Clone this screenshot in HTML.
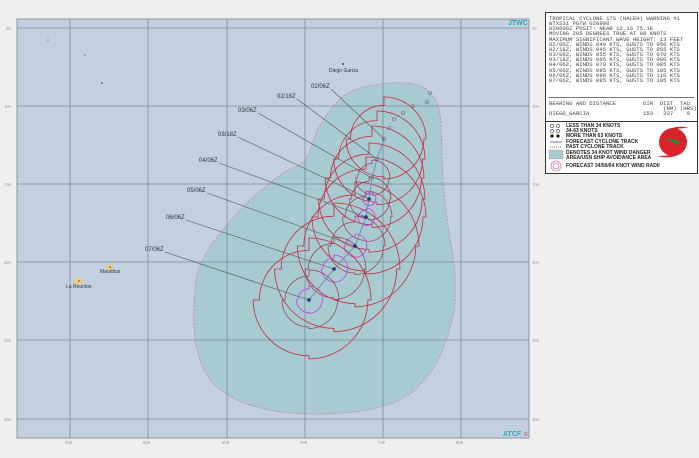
<!DOCTYPE html>
<html><head><meta charset="utf-8"><style>
html,body{margin:0;padding:0;background:#efefef;width:699px;height:458px;overflow:hidden;font-family:"Liberation Sans",sans-serif}
#m{position:absolute;left:0;top:0}
.box{position:absolute;left:545px;width:151px;border:1px solid #333;background:#fff}
.t{font-family:"Liberation Mono",monospace;font-size:5.6px;line-height:5.15px;color:#444;white-space:pre;position:absolute}
.lg{position:absolute;left:20px;font-size:5px;font-weight:bold;color:#222;white-space:nowrap}
</style></head><body>
<svg id="m" width="699" height="458" xmlns="http://www.w3.org/2000/svg">
<rect x="17" y="19" width="512" height="419" fill="#c3d0e0" stroke="#8a96a6" stroke-width="1"/>
<path id="da" d="" fill="#a7cbd0" stroke="#d8808f" stroke-width="0.8" stroke-dasharray="2,1.5"/>
<g stroke="#7f8a98" stroke-width="0.8">
<line x1="70" y1="19" x2="70" y2="438"/><line x1="148" y1="19" x2="148" y2="438"/><line x1="227" y1="19" x2="227" y2="438"/><line x1="305" y1="19" x2="305" y2="438"/><line x1="383" y1="19" x2="383" y2="438"/><line x1="461" y1="19" x2="461" y2="438"/>
<line x1="17" y1="28" x2="529" y2="28"/><line x1="17" y1="106" x2="529" y2="106"/><line x1="17" y1="184" x2="529" y2="184"/><line x1="17" y1="262" x2="529" y2="262"/><line x1="17" y1="340" x2="529" y2="340"/><line x1="17" y1="419" x2="529" y2="419"/>
</g>
<g font-size="4.5" fill="#888" font-family="Liberation Serif,serif">
<text x="6" y="30">5S</text><text x="4" y="108">10S</text><text x="4" y="186">15S</text><text x="4" y="264">20S</text><text x="4" y="342">25S</text><text x="4" y="421">30S</text>
<text x="532" y="30">5S</text><text x="532" y="108">10S</text><text x="532" y="186">15S</text><text x="532" y="264">20S</text><text x="532" y="342">25S</text><text x="532" y="421">30S</text>
<text x="65" y="444">55E</text><text x="143" y="444">60E</text><text x="222" y="444">65E</text><text x="300" y="444">70E</text><text x="378" y="444">75E</text><text x="456" y="444">80E</text>
</g>
<text x="508" y="25" font-size="7" font-weight="bold" fill="#2aa7b0">JTWC</text>
<text x="503" y="436" font-size="7" font-weight="bold" fill="#2aa7b0">ATCF</text><text x="524" y="436" font-size="5" fill="#c33">©</text>
<circle cx="48" cy="40" r="0.8" fill="#777"/><circle cx="85" cy="55" r="0.8" fill="#777"/><circle cx="102" cy="83" r="1" fill="#777"/>
<circle cx="343" cy="64" r="1" fill="#444"/><text x="329" y="72" font-size="5" fill="#333">Diego Garcia</text>
<ellipse cx="110" cy="267" rx="3" ry="2.5" fill="#f0d060"/><circle cx="110" cy="267" r="0.7" fill="#333"/><text x="100" y="273" font-size="5" fill="#333">Mauritius</text>
<ellipse cx="78" cy="281" rx="4" ry="3" fill="#f0d060"/><circle cx="79" cy="281" r="0.7" fill="#333"/><text x="66" y="288" font-size="5" fill="#333">La Reunion</text>
<g id="radii" fill="none"></g>
<g stroke="#555" stroke-width="0.6" id="ll"></g>
<g font-size="6" fill="#333" id="lt"></g>
<polyline points="430,93 427,102 413,106 403,113 394,119 389,128 384,139" fill="none" stroke="#8aa" stroke-width="0.6" stroke-dasharray="1,1"/>
<polyline points="384,139 377,159 372,178 369,199 366,217 355,246 334,269 309,300" fill="none" stroke="#6a7fb0" stroke-width="0.8"/>
<g fill="none" stroke="#667" stroke-width="0.6"><circle cx="430" cy="93" r="1.5"/><circle cx="427" cy="102" r="1.5"/><circle cx="413" cy="106" r="1.5"/><circle cx="403" cy="113" r="1.5"/><circle cx="394" cy="119" r="1.5"/><circle cx="389" cy="128" r="1.5"/><circle cx="384" cy="139" r="1.8"/><circle cx="377" cy="159" r="1.5"/><circle cx="372" cy="178" r="1.5"/></g>
<g fill="#223388"><circle cx="369" cy="199" r="1.8"/><circle cx="366" cy="217" r="1.8"/><circle cx="355" cy="246" r="1.8"/><circle cx="334" cy="269" r="1.8"/><circle cx="309" cy="300" r="1.8"/></g>
</svg>
<div class="box" style="top:12px;height:110px">
<div class="t" style="left:3px;top:3px">TROPICAL CYCLONE 17S (HALEH) WARNING #1
WTXS31 PGTW 020900
020600Z POSIT: NEAR 12.1S 75.1E
MOVING 205 DEGREES TRUE AT 08 KNOTS
MAXIMUM SIGNIFICANT WAVE HEIGHT: 13 FEET
02/06Z, WINDS 040 KTS, GUSTS TO 050 KTS
02/18Z, WINDS 045 KTS, GUSTS TO 055 KTS
03/06Z, WINDS 055 KTS, GUSTS TO 070 KTS
03/18Z, WINDS 065 KTS, GUSTS TO 080 KTS
04/06Z, WINDS 070 KTS, GUSTS TO 085 KTS
05/06Z, WINDS 085 KTS, GUSTS TO 105 KTS
06/06Z, WINDS 090 KTS, GUSTS TO 110 KTS
07/06Z, WINDS 085 KTS, GUSTS TO 105 KTS</div>
<div style="position:absolute;left:3px;right:3px;top:84px;border-top:1px solid #777"></div>
<div class="t" style="left:3px;top:88px">BEARING AND DISTANCE        DIR  DIST  TAU
                                  (NM) (HRS)
DIEGO_GARCIA                153   337    0</div>
</div>
<div class="box" style="top:121px;height:51px">
<svg width="151" height="51" style="position:absolute;left:0;top:0">
<g fill="none" stroke="#333" stroke-width="0.6"><circle cx="6" cy="4" r="1.6"/><circle cx="12" cy="4" r="1.6"/><circle cx="6" cy="9" r="1.6"/><circle cx="12" cy="9" r="1.6"/></g>
<g fill="#111"><circle cx="6" cy="14" r="1.6"/><circle cx="12" cy="14" r="1.6"/></g>
<line x1="4" y1="20" x2="16" y2="20" stroke="#6a7fb0" stroke-width="1"/>
<line x1="4" y1="25" x2="16" y2="25" stroke="#555" stroke-width="0.8" stroke-dasharray="1,1"/>
<rect x="3" y="28" width="14" height="9" fill="#a7cbd0" stroke="#d8808f" stroke-width="0.6" stroke-dasharray="1.5,1"/>
<circle cx="10" cy="44" r="5" fill="#fff" stroke="#e08090" stroke-width="0.8"/><circle cx="10" cy="44" r="3" fill="none" stroke="#c050c0" stroke-width="0.6"/>
<circle cx="127" cy="20" r="14" fill="#d8232a"/><path d="M118,10 Q130,2 143,6 Q132,6 127,8Z" fill="#d8232a"/><path d="M136,31 Q124,38 111,34 Q122,34 127,32Z" fill="#d8232a"/>
<path d="M120,17 l3,-1 l2,2 l4,-1 l3,2 l2,3 l-2,1 z" fill="#2a8a3a"/>
</svg>
<div class="lg" style="top:1px">LESS THAN 34 KNOTS</div>
<div class="lg" style="top:6px">34-63 KNOTS</div>
<div class="lg" style="top:11px">MORE THAN 63 KNOTS</div>
<div class="lg" style="top:17px">FORECAST CYCLONE TRACK</div>
<div class="lg" style="top:22px">PAST CYCLONE TRACK</div>
<div class="lg" style="top:28px">DENOTES 34 KNOT WIND DANGER</div>
<div class="lg" style="top:33px">AREA/USN SHIP AVOIDANCE AREA</div>
<div class="lg" style="top:41px">FORECAST 34/50/64 KNOT WIND RADII</div>
</div>
<script>
var NS="http://www.w3.org/2000/svg";
var P=[[380,84],[413,84],[430,93],[440,115],[443,180],[448,225],[455,275],[452,320],[432,370],[395,402],[330,414],[260,408],[215,385],[196,345],[195,290],[205,255],[240,210],[280,175],[305,160],[320,125],[345,95]];
var n=P.length,d="M"+P[0][0]+","+P[0][1];
for(var i=0;i<n;i++){var p0=P[(i-1+n)%n],p1=P[i],p2=P[(i+1)%n],p3=P[(i+2)%n];
d+=" C"+(p1[0]+(p2[0]-p0[0])/6)+","+(p1[1]+(p2[1]-p0[1])/6)+" "+(p2[0]-(p3[0]-p1[0])/6)+","+(p2[1]-(p3[1]-p1[1])/6)+" "+p2[0]+","+p2[1];}
document.getElementById("da").setAttribute("d",d+"Z");
function q(cx,cy,ne,se,sw,nw){return "M"+cx+","+(cy-ne)+" A"+ne+","+ne+" 0 0 1 "+(cx+ne)+","+cy+" L"+(cx+se)+","+cy+" A"+se+","+se+" 0 0 1 "+cx+","+(cy+se)+" L"+cx+","+(cy+sw)+" A"+sw+","+sw+" 0 0 1 "+(cx-sw)+","+cy+" L"+(cx-nw)+","+cy+" A"+nw+","+nw+" 0 0 1 "+cx+","+(cy-nw)+" Z";}
var pts=[[384,139,42,0,0],[377,159,48,0,0],[372,178,52,18,0],[369,199,56,22,7],[366,217,60,26,9],[355,246,64,30,12],[334,269,66,32,14],[309,300,62,30,14]];
var g=document.getElementById("radii");
pts.forEach(function(p){
 [[p[2],"#c8283c",0.8],[p[3],"#9a3a50",0.7],[p[4],"#c040e0",0.8]].forEach(function(r){
  if(!r[0])return;var R=r[0];var e=document.createElementNS(NS,"path");
  e.setAttribute("d",q(p[0],p[1],R,R*0.95,R*0.9,R*0.8));e.setAttribute("stroke",r[1]);e.setAttribute("stroke-width",r[2]);g.appendChild(e);});
});
var labs=[["02/06Z",311,88,384,139],["02/18Z",277,98,377,159],["03/06Z",238,112,372,178],["03/18Z",218,136,369,199],["04/06Z",199,162,366,217],["05/06Z",187,192,355,246],["06/06Z",166,219,334,269],["07/06Z",145,251,309,300]];
var ll=document.getElementById("ll"),lt=document.getElementById("lt");
labs.forEach(function(l){var t=document.createElementNS(NS,"text");t.setAttribute("x",l[1]);t.setAttribute("y",l[2]);t.textContent=l[0];lt.appendChild(t);
 var ln=document.createElementNS(NS,"line");ln.setAttribute("x1",l[1]+20);ln.setAttribute("y1",l[2]+1);ln.setAttribute("x2",l[3]);ln.setAttribute("y2",l[4]);ll.appendChild(ln);});
</script>
</body></html>
